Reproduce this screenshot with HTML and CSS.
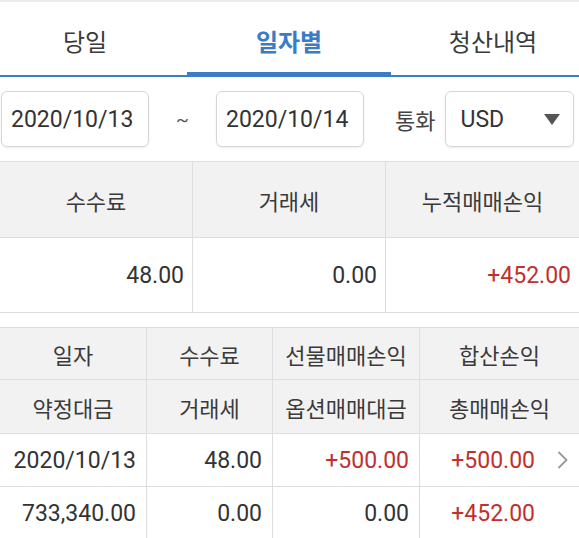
FILE: index.html
```html
<!DOCTYPE html>
<html lang="ko">
<head>
<meta charset="utf-8">
<title>일자별</title>
<link rel="stylesheet" href="styles.css">
</head>
<body>
<div class="page">
  <div class="tabs">
    <div class="tab">당일</div>
    <div class="tab active">일자별</div>
    <div class="tab">청산내역</div>
  </div>

  <div class="filter">
    <div class="field date">2020/10/13</div>
    <span class="tilde">~</span>
    <div class="field date">2020/10/14</div>
    <span class="cur-label">통화</span>
    <div class="field select">
      <span>USD</span>
      <svg class="caret" width="16" height="11" viewBox="0 0 16 11"><polygon points="0,0 16,0 8,11" fill="#555"/></svg>
    </div>
  </div>

  <div class="summary">
    <div class="cell head">수수료</div>
    <div class="cell head">거래세</div>
    <div class="cell head last">누적매매손익</div>
    <div class="cell num">48.00</div>
    <div class="cell num">0.00</div>
    <div class="cell num last up">+452.00</div>
  </div>

  <div class="detail">
    <div class="cell head r1">일자</div>
    <div class="cell head r1">수수료</div>
    <div class="cell head r1">선물매매손익</div>
    <div class="cell head r1 last">합산손익</div>
    <div class="cell head r2">약정대금</div>
    <div class="cell head r2">거래세</div>
    <div class="cell head r2">옵션매매대금</div>
    <div class="cell head r2 last">총매매손익</div>

    <div class="cell num r3">2020/10/13</div>
    <div class="cell num r3">48.00</div>
    <div class="cell num r3 up">+500.00</div>
    <div class="cell num r3 last up link">
      <span>+500.00</span>
      <svg class="chev" width="11" height="18" viewBox="0 0 11 18"><polyline points="1.5,1 9.5,9 1.5,17" fill="none" stroke="#999" stroke-width="1.8"/></svg>
    </div>
    <div class="cell num r4">733,340.00</div>
    <div class="cell num r4">0.00</div>
    <div class="cell num r4">0.00</div>
    <div class="cell num r4 last up wide">+452.00</div>
  </div>
</div>
</body>
</html>
```

FILE: styles.css
```css
html, body {
  margin: 0;
  padding: 0;
  background: #fff;
}
body {
  overflow: hidden;
  font-family: Roboto, "Noto Sans CJK KR", sans-serif;
  color: #333;
}
.page {
  width: 579px;
  overflow: hidden;
}

/* tabs */
.tabs {
  display: grid;
  grid-template-columns: repeat(3, 204px);
  width: 612px;
  margin-left: -17px;
  border-top: 2px solid #ececec;
  border-bottom: 2px solid #3d7cc6;
  height: 73px;
}
.tab {
  display: flex;
  align-items: center;
  justify-content: center;
  font-family: "Noto Sans CJK KR", sans-serif;
  font-size: 24px;
  color: #3a3a3a;
  padding-top: 3px;
}
.tab.active {
  color: #3a7bc6;
  font-weight: 700;
  box-shadow: inset 0 -3px 0 #3d7cc6;
}

/* filter row */
.filter {
  display: flex;
  align-items: center;
  padding: 14px 0 14px 1px;
  height: 56px;
}
.field {
  box-sizing: border-box;
  height: 56px;
  border: 1px solid #d6d6d6;
  border-radius: 6px;
  box-shadow: 0 1px 2px rgba(0,0,0,0.08);
  display: flex;
  align-items: center;
  font-size: 23px;
  color: #333;
}
.date {
  width: 148px;
  padding-left: 9px;
}
.tilde {
  width: 67px;
  text-align: center;
  font-size: 19px;
  color: #555;
}
.cur-label {
  font-family: "Noto Sans CJK KR", sans-serif;
  font-size: 22px;
  color: #444;
  margin-left: 31px;
  margin-right: 10px;
}
.select {
  width: 129px;
  padding-left: 14px;
  padding-right: 13px;
  justify-content: space-between;
}

/* tables */
.cell {
  box-sizing: border-box;
  border-right: 1px solid #dedede;
  border-bottom: 1px solid #dedede;
  display: flex;
  align-items: center;
}
.cell.last {
  border-right: none;
}
.head {
  background: #f2f2f2;
  justify-content: center;
  font-family: "Noto Sans CJK KR", sans-serif;
  font-size: 22px;
  color: #3a3a3a;
}
.num {
  justify-content: flex-end;
  font-size: 23px;
  color: #333;
  padding-right: 8px;
}
.up {
  color: #c0302c;
}

.summary {
  display: grid;
  grid-template-columns: 193px 193px 1fr;
  grid-template-rows: 76px 75px;
  border-top: 1px solid #dedede;
}

.detail {
  display: grid;
  grid-template-columns: 147px 126px 147px 1fr;
  grid-template-rows: 52px 54px 53px 53px;
  border-top: 1px solid #dedede;
  margin-top: 14px;
}
.detail .num {
  padding-right: 10px;
}
.detail .link {
  padding-right: 11px;
}
.detail .wide {
  padding-right: 44px;
}
.chev {
  margin-left: 22px;
  flex: none;
}
```
